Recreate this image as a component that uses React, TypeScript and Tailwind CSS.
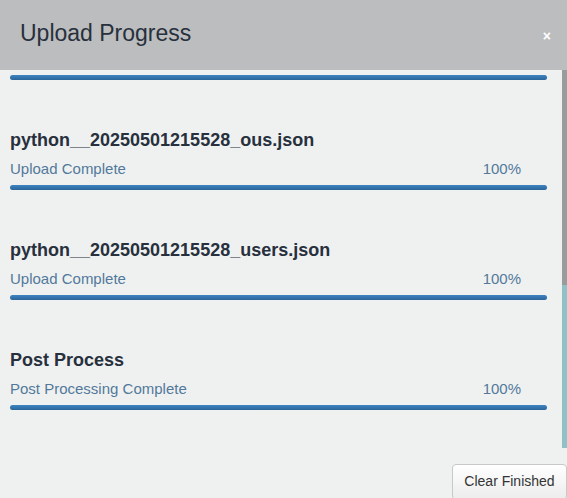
import React from "react";

const items = [
  { title: "python__20250501215528_ous.json", status: "Upload Complete" },
  { title: "python__20250501215528_users.json", status: "Upload Complete" },
  { title: "Post Process", status: "Post Processing Complete" },
];

function Bar() {
  return (
    <div className="h-[5px] w-[537px] rounded-[3px] bg-gradient-to-b from-[#3d84c2] to-[#2b6599]" />
  );
}

export default function App() {
  return (
    <div
      className="w-[567px] h-[498px] bg-[#eff1f1] flex flex-col overflow-hidden"
      style={{ fontFamily: '"Liberation Sans", Arial, sans-serif' }}
    >
      <div className="h-[70px] shrink-0 bg-[#bcbdbf] flex items-center justify-between pl-5 pr-4">
        <h4 className="text-[23px] text-[#27303c] leading-none mb-[4px]">Upload Progress</h4>
        <span className="text-white font-bold text-[14px] leading-none mt-[1px]">×</span>
      </div>
      <div className="h-[378px] shrink-0 flex">
        <div className="flex-1 overflow-hidden pl-[10px] pt-[5px]">
          <Bar />
          {items.map((it) => (
            <div key={it.title} className="mt-[50px]">
              <div className="text-[18px] font-bold text-[#27303c] leading-[20px]">{it.title}</div>
              <div className="mt-[9px] flex justify-between w-[511px] text-[15px] leading-[20px] text-[#52799b]">
                <span>{it.status}</span>
                <span>100%</span>
              </div>
              <div className="mt-[6px]">
                <Bar />
              </div>
            </div>
          ))}
        </div>
        <div className="w-[5px] flex flex-col">
          <div className="h-[215px] bg-[#9a9b9c]" />
          <div className="h-[163px] bg-[#8fc1c5]" />
        </div>
      </div>
      <div className="flex-1 flex justify-end pt-4">
        <button className="w-[115px] h-[36px] rounded-[4px] border border-[#c8c8c8] bg-gradient-to-b from-white to-[#ececec] text-[14px] text-[#333] pb-[1px]">
          Clear Finished
        </button>
      </div>
    </div>
  );
}
